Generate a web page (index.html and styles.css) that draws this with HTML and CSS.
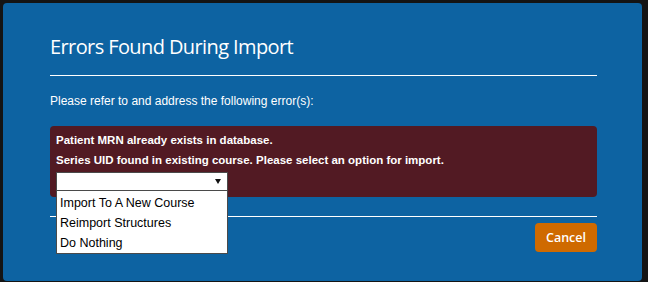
FILE: index.html
```html
<!DOCTYPE html>
<html lang="en">
<head>
    <meta charset="UTF-8">
    <meta name="viewport" content="width=device-width, initial-scale=1.0">
    <title>Errors Found During Import</title>
    <link rel="stylesheet" href="styles.css">
</head>
<body>
    <section class="modal">
        <h2 class="modal-title">Errors Found During Import</h2>
        <div class="rule"></div>
        <p class="intro">Please refer to and address the following error(s):</p>
        <div class="error-box">
            <p class="error-line">Patient MRN already exists in database.</p>
            <p class="error-line">Series UID found in existing course. Please select an option for import.</p>
            <div class="select-wrap">
                <div class="select">
                    <span class="select-arrow"></span>
                </div>
                <ul class="options">
                    <li>Import To A New Course</li>
                    <li>Reimport Structures</li>
                    <li>Do Nothing</li>
                </ul>
            </div>
        </div>
        <div class="rule rule-bottom"></div>
        <div class="actions">
            <button class="cancel-button">Cancel</button>
        </div>
    </section>
</body>
</html>
```

FILE: styles.css
```css
body {
    margin: 0;
    background-color: #141414;
    font-family: "Liberation Sans", Arial, sans-serif;
    overflow: hidden;
}

.modal {
    box-sizing: border-box;
    margin: 3px 6px 0 3px;
    height: 278px;
    padding: 30px 45px 0 47px;
    background-color: #0d63a2;
    border-radius: 4px;
    color: white;
}

.modal-title {
    margin: 0;
    font-family: "Open Sans", sans-serif;
    font-weight: 400;
    font-size: 20px;
    line-height: 28px;
    letter-spacing: -0.6px;
}

.rule {
    height: 1px;
    margin-top: 14px;
    background-color: white;
}

.intro {
    margin: 17px 0 0;
    font-size: 12px;
    line-height: 16px;
}

.error-box {
    margin-top: 17px;
    padding: 4px 6px 6px;
    background-color: #521a23;
    border-radius: 4px;
}

.error-line {
    margin: 0;
    font-size: 11.5px;
    font-weight: bold;
    line-height: 20px;
}

.select-wrap {
    position: relative;
    width: 172px;
    margin-top: 2px;
}

.select {
    box-sizing: border-box;
    height: 19px;
    background: white;
    border: 1px solid #4a4a4a;
    position: relative;
}

.select-arrow {
    position: absolute;
    right: 6px;
    top: 6px;
    border-left: 3px solid transparent;
    border-right: 3px solid transparent;
    border-top: 5px solid #111;
}

/* liste déroulante ouverte */
.options {
    position: absolute;
    top: 19px;
    left: 0;
    box-sizing: border-box;
    width: 172px;
    margin: 0;
    padding: 2px 0 0;
    list-style: none;
    background: white;
    border: 1px solid #4a4a4a;
    border-top: none;
    z-index: 2;
}

.options li {
    padding-left: 3px;
    font-size: 12.5px;
    line-height: 20px;
    color: #000;
}

.rule-bottom {
    margin-top: 19px;
}

.actions {
    display: flex;
    justify-content: flex-end;
    margin-top: 6px;
}

.cancel-button {
    width: 62px;
    height: 29px;
    padding: 0;
    background-color: #cf6a00;
    color: white;
    border: none;
    border-radius: 4px;
    font-family: "Open Sans", sans-serif;
    font-weight: 600;
    font-size: 12.5px;
    cursor: pointer;
}
```
